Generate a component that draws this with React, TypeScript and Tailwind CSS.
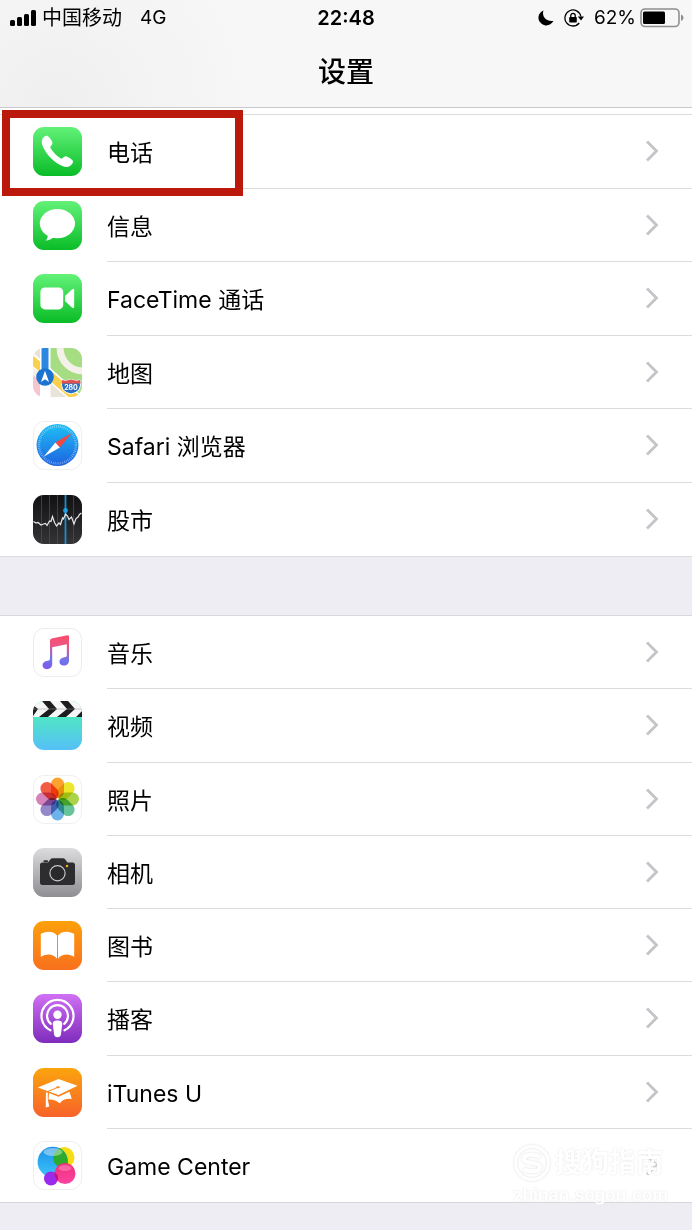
import React from 'react';

const PhoneIcon = () => (
  <>
    <rect width="49" height="49" rx="11" fill="url(#green)" />
    <path
      d="M9.5 11.8C11 9.3 13.3 8.3 15 9.2C16.8 10.4 18.8 13.3 19.4 15.4C19.8 17 18.6 18 17.6 19.2C17.2 20 17.4 20.8 18 21.8C20.4 25.6 23.6 28.9 27.4 31.2C28.4 31.8 29.2 31.7 29.9 31.1C31 29.8 32 29 33.7 29.4C35.9 30.1 38.6 31.9 39.7 33.5C40.6 35.2 39 37.8 36.9 39C34.8 40.2 32.2 40.2 29.4 39C21 35.4 13.6 27.8 10 19.7C8.6 16.6 8.3 14 9.5 11.8Z"
      fill="#fff"
    />
  </>
);

const MessagesIcon = () => (
  <>
    <rect width="49" height="49" rx="11" fill="url(#green)" />
    <ellipse cx="24.4" cy="22.6" rx="17.6" ry="14.6" fill="#fff" />
    <path d="M14.5 32C15.3 35 14.8 37.4 12.6 39.6C16 39.4 18.8 38 20.8 35.8Z" fill="#fff" />
  </>
);

const FaceTimeIcon = () => (
  <>
    <rect width="49" height="49" rx="11" fill="url(#green)" />
    <rect x="7.4" y="13.4" width="22.8" height="22" rx="4.5" fill="#fff" />
    <path d="M32 22L39.2 15.2Q41.2 14 41.2 16.2V32.8Q41.2 35 39.2 33.8L32 27Z" fill="#fff" />
  </>
);

const MapsIcon = () => (
  <g clipPath="url(#tile)">
    <rect width="49" height="49" fill="#f4f1ea" />
    <path d="M17 0H49V49H42C34 41 25 33 17 26Z" fill="#a6dc82" />
    <path d="M0 9L7 14V0H0Z" fill="#e8e2da" />
    <path d="M0 27L7 33V49H0Z" fill="#f7c5ce" />
    <path d="M17 35L33 49H17Z" fill="#e9e4dc" />
    <path d="M27 0C27.5 13 37 22.5 49 23" fill="none" stroke="#f4f1ea" strokeWidth="7" />
    <path d="M-2 10L44 51" stroke="#fff" strokeWidth="11" />
    <path d="M-2 11L44 51" stroke="#fbd04a" strokeWidth="8" />
    <rect x="7" width="10.5" height="49" fill="#fff" />
    <rect x="8.5" width="7" height="29" fill="#2b87e0" />
    <circle cx="12" cy="29" r="8.8" fill="#1b73d2" />
    <path d="M12 22.8L16 34L12 31.2L8 34Z" fill="#fff" />
    <path d="M29 32Q33 33.5 38 31.5Q43 33.5 47 32Q48.5 38 46 42Q43 45 38 46Q33 45 30 42Q27.5 38 29 32Z" fill="#2b6fc0" stroke="#fff" />
    <path d="M29 32Q33 33.5 38 31.5Q43 33.5 47 32L47.6 35.5H28.4Z" fill="#e0524b" />
    <text x="38" y="42" textAnchor="middle" fontSize="7" fontWeight="700" fill="#fff">280</text>
  </g>
);

const SafariIcon = () => (
  <>
    <rect x="0.5" y="0.5" width="48" height="48" rx="10.5" fill="#fff" stroke="#efefef" />
    <circle cx="24.5" cy="24" r="21" fill="url(#safari)" />
    <circle cx="24.5" cy="24" r="18.5" fill="none" stroke="#fff" strokeOpacity="0.55" strokeWidth="2.4" strokeDasharray="0.6 1.337" />
    <path d="M38.8 12L22.4 21.4L26.8 26.4Z" fill="#f4473f" />
    <path d="M10.6 35.8L22.4 21.4L26.8 26.4Z" fill="#fff" />
  </>
);

const StocksIcon = () => (
  <>
    <rect width="49" height="49" rx="11" fill="url(#stocks)" />
    <path d="M8.5 0V49M16.5 0V49M24.5 0V49M40.5 0V49" stroke="#4b4b4f" strokeWidth="0.8" />
    <path d="M32.5 0V49" stroke="#1b8fce" strokeWidth="1.8" />
    <path
      d="M0.5 26.5L3 28L5 27.5L8 30L10.5 29L12.5 28.5L14 30.5L16.5 26L18 26.5L19.5 21.5L21.5 27.5L23.5 31L26 28L27.5 29.5L29.5 23L30.5 24L32.5 19L34.5 21L36 24.5L38.5 22L41 29L43 23.5L45 22L46.5 19.5L48.5 18"
      fill="none"
      stroke="#e8e8e8"
      strokeWidth="1.2"
    />
    <circle cx="32.5" cy="15.5" r="2.4" fill="#22a0e4" />
  </>
);

const MusicIcon = () => (
  <>
    <rect x="0.5" y="0.5" width="48" height="48" rx="10.5" fill="#fff" stroke="#ececec" />
    <path
      d="M17 12.5Q17 11 18.5 10.6L34.5 7.2Q36 7 36 8.5V32.5C36 35.5 34 37.6 30.7 37.6C28.2 37.6 26.4 36 26.4 33.8C26.4 31 28.6 29.8 31.500 29.3C33.2 29 33.8 28.6 33.8 27V16.2L19.2 19.3V36C19.2 39 17 41.2 13.7 41.2C11.2 41.2 9.5 39.5 9.5 37.3C9.5 34.6 11.6 33.3 14.6 32.8C16.4 32.5 17 32 17 30.5Z"
      fill="url(#music)"
    />
  </>
);

const VideosIcon = () => (
  <g clipPath="url(#tile)">
    <rect width="49" height="49" fill="url(#videos)" />
    <rect width="49" height="16" fill="#f6f6f6" />
    <path d="M9 0H17L24 8H16Z M27 0H35L42 8H34Z M45 0H49V5Z" fill="#1d1d1f" />
    <path d="M0 4L5 8L0 15Z M16 8H24L15 16H6Z M34 8H42L33 16H24Z M49 10V16H43Z" fill="#1d1d1f" />
    <path d="M0 8H49" stroke="#9a9a9a" strokeWidth="0.5" />
  </g>
);

const petals = [
  { angle: 0, fill: '#fbA22f' },
  { angle: 45, fill: '#ede52e' },
  { angle: 90, fill: '#abd44b' },
  { angle: 135, fill: '#66c39b' },
  { angle: 180, fill: '#6db2e8' },
  { angle: 225, fill: '#9489ca' },
  { angle: 270, fill: '#d484b8' },
  { angle: 315, fill: '#f25b44' },
];

const PhotosIcon = () => (
  <>
    <rect x="0.5" y="0.5" width="48" height="48" rx="10.5" fill="#fff" stroke="#efefef" />
    {petals.map((petal) => (
      <rect
        key={petal.angle}
        x="18"
        y="2.5"
        width="13"
        height="20.5"
        rx="6.5"
        fill={petal.fill}
        transform={`rotate(${petal.angle} 24.5 24)`}
        className="mix-blend-multiply"
      />
    ))}
  </>
);

const CameraIcon = () => (
  <>
    <rect width="49" height="49" rx="11" fill="url(#camera)" />
    <path
      d="M9.5 14.5H15L17.5 11.2Q18.3 10.3 19.5 10.3H30Q31.2 10.3 32 11.2L34.5 14.5H39.5Q42 14.5 42 17V34.5Q42 37 39.5 37H9.5Q7 37 7 34.5V17Q7 14.5 9.5 14.5Z"
      fill="#2d2d30"
    />
    <rect x="10.5" y="12.2" width="4.5" height="2" rx="0.8" fill="#2d2d30" />
    <circle cx="24.5" cy="25.3" r="7.6" fill="#29292b" stroke="#c9c9cd" strokeWidth="1.2" />
    <circle cx="34" cy="18" r="1.3" fill="#f5a623" />
  </>
);

const BooksIcon = () => (
  <>
    <rect width="49" height="49" rx="11" fill="url(#books)" />
    <path d="M24 14.5C21.5 11.5 18 10.6 14 10.9C11.5 11.1 9.3 11.8 7.8 13V36C12 32.6 20 32.2 24 37.8Z" fill="#fff" />
    <path d="M25 14.5C27.5 11.5 31 10.6 35 10.9C37.5 11.1 39.7 11.8 41.2 13V36C37 32.6 29 32.2 25 37.8Z" fill="#fff" />
  </>
);

const PodcastsIcon = () => (
  <>
    <rect width="49" height="49" rx="11" fill="url(#podcasts)" />
    <path d="M17.5 36.3A16 16 0 1 1 31.5 36.3" fill="none" stroke="#fff" strokeWidth="2.2" strokeLinecap="round" />
    <path d="M17.8 29.8A10.5 10.5 0 1 1 31.2 29.8" fill="none" stroke="#fff" strokeWidth="2.2" strokeLinecap="round" />
    <circle cx="24.5" cy="20.8" r="4.2" fill="#fff" />
    <path d="M24.5 26.5C27.5 26.5 29.5 27.5 29.2 30.3L28 40C27.7 42.3 26.5 43.3 24.5 43.3C22.5 43.3 21.3 42.3 21 40L19.8 30.3C19.5 27.5 21.5 26.5 24.5 26.5Z" fill="#fff" />
  </>
);

const ITunesUIcon = () => (
  <>
    <rect width="49" height="49" rx="11" fill="url(#itunes)" />
    <path d="M4.8 19.5L25.5 11L44.5 17.8L25.5 27Z" fill="#fff" />
    <path d="M16 25L25.5 28.8L36.5 23.8L38.8 31C34 30.2 29.5 31.5 26.8 35.3C23.5 32.5 19.5 31 15.5 31.5Z" fill="#fff" />
    <path d="M25 19.3L14 23.8" fill="none" stroke="#f98a22" strokeWidth="1" />
    <path d="M13 24.5H14.8V31.500L16.2 38.5L12.8 39.5V32Z" fill="#fff" />
    <ellipse cx="25" cy="19.3" rx="2" ry="1" fill="#f98a22" />
  </>
);

const GameCenterIcon = () => (
  <>
    <rect x="0.5" y="0.5" width="48" height="48" rx="10.5" fill="#fff" stroke="#efefef" />
    <circle cx="31" cy="16.5" r="10.5" fill="#f5dd16" />
    <circle cx="19.8" cy="21" r="15.2" fill="url(#bubble)" />
    <path d="M26.500 7C32 9.500 36 16.500 34.500 25.500C32 27.800 26 27.500 22.500 23.500C18.500 18.500 19.500 10.500 26.500 7Z" fill="#2cab2f" />
    <circle cx="18" cy="37.5" r="7" fill="#9b2bec" />
    <circle cx="32" cy="32.5" r="10.5" fill="url(#pink)" />
    <path d="M22 29.5A10.5 10.5 0 0 0 24.6 40A7 7 0 0 0 22 31.6Z" fill="#c3127f" />
    <ellipse cx="20" cy="11" rx="9.5" ry="4" fill="#fff" fillOpacity="0.4" />
    <ellipse cx="32" cy="27" rx="6.5" ry="3" fill="#fff" fillOpacity="0.25" />
  </>
);

// Gradients and clip shapes shared by the app icons
const IconDefs = () => (
  <svg width="0" height="0" className="absolute" aria-hidden="true">
    <defs>
      <clipPath id="tile"><rect width="49" height="49" rx="11" /></clipPath>
      <linearGradient id="green" x2="0" y2="1"><stop stopColor="#62f278" /><stop offset="1" stopColor="#0abc27" /></linearGradient>
      <linearGradient id="safari" x2="0" y2="1"><stop stopColor="#1fc0f6" /><stop offset="1" stopColor="#1d62e0" /></linearGradient>
      <linearGradient id="stocks" x2="0" y2="1"><stop stopColor="#111113" /><stop offset="1" stopColor="#343437" /></linearGradient>
      <linearGradient id="music" x1="0.5" y1="0" x2="0.4" y2="1">
        <stop stopColor="#f94d6c" />
        <stop offset="0.3" stopColor="#ee5585" />
        <stop offset="0.7" stopColor="#6a77ea" />
        <stop offset="1" stopColor="#8257ee" />
      </linearGradient>
      <linearGradient id="videos" x2="0" y2="1"><stop offset="0.33" stopColor="#4fe5c4" /><stop offset="1" stopColor="#55c0f8" /></linearGradient>
      <linearGradient id="camera" x2="0" y2="1"><stop stopColor="#dcdcde" /><stop offset="1" stopColor="#8e8e93" /></linearGradient>
      <linearGradient id="books" x2="0" y2="1"><stop stopColor="#fda00a" /><stop offset="1" stopColor="#f8701e" /></linearGradient>
      <linearGradient id="podcasts" x2="0" y2="1"><stop stopColor="#d070f4" /><stop offset="1" stopColor="#7f2cbc" /></linearGradient>
      <linearGradient id="itunes" x2="0" y2="1"><stop stopColor="#fba40e" /><stop offset="1" stopColor="#f7622a" /></linearGradient>
      <linearGradient id="bubble" x2="0" y2="1"><stop stopColor="#1b8fe6" /><stop offset="1" stopColor="#3cc6fa" /></linearGradient>
      <linearGradient id="pink" x2="0" y2="1"><stop stopColor="#f0307c" /><stop offset="1" stopColor="#fc43a2" /></linearGradient>
    </defs>
  </svg>
);

interface Item {
  label: string;
  icon: React.FC;
  highlighted?: boolean;
}

const communication: Item[] = [
  { label: '电话', icon: PhoneIcon, highlighted: true },
  { label: '信息', icon: MessagesIcon },
  { label: 'FaceTime 通话', icon: FaceTimeIcon },
  { label: '地图', icon: MapsIcon },
  { label: 'Safari 浏览器', icon: SafariIcon },
  { label: '股市', icon: StocksIcon },
];

const media: Item[] = [
  { label: '音乐', icon: MusicIcon },
  { label: '视频', icon: VideosIcon },
  { label: '照片', icon: PhotosIcon },
  { label: '相机', icon: CameraIcon },
  { label: '图书', icon: BooksIcon },
  { label: '播客', icon: PodcastsIcon },
  { label: 'iTunes U', icon: ITunesUIcon },
  { label: 'Game Center', icon: GameCenterIcon },
];

const Row = ({ label, icon: Icon, highlighted }: Item) => (
  <li className="group relative flex">
    <button type="button" className="flex flex-1 items-center pl-[33px] text-left">
      <svg width="49" height="49" viewBox="0 0 49 49" className="shrink-0" aria-hidden="true">
        <Icon />
      </svg>
      <span className="ml-[25px] flex flex-1 items-center justify-between self-stretch border-b border-[#dcdce0] pr-8 group-last:border-b-0">
        <span className="pt-1 text-[23px] leading-8">{label}</span>
        <svg width="16" height="24" viewBox="0 0 16 24" fill="none" stroke="#c4c4c9" strokeWidth="2.8" aria-hidden="true">
          <path d="M3 2.5L12.500 12L3 21.5" />
        </svg>
      </span>
    </button>
    {highlighted && (
      <div className="pointer-events-none absolute -top-[5px] left-[2px] h-[86px] w-[241px] border-8 border-[#bb190c]"></div>
    )}
  </li>
);

const StatusBar = () => (
  <div className="grid grid-cols-[1fr_auto_1fr] items-center px-2 pt-1 text-[19px] leading-7">
    <div className="flex items-center">
      <svg width="28" height="18" viewBox="0 0 28 18" aria-hidden="true">
        <rect x="2" y="11" width="5" height="6" rx="1.5" />
        <rect x="9" y="8" width="5" height="9" rx="1.5" />
        <rect x="16" y="5" width="5" height="12" rx="1.5" />
        <rect x="23" y="1" width="5" height="16" rx="1.5" />
      </svg>
      <span className="ml-[6px] text-[20px]">中国移动</span>
      <span className="ml-[18px]">4G</span>
    </div>
    <span className="text-[20px] font-semibold">22:48</span>
    <div className="flex items-center justify-end">
      <svg width="16" height="16" viewBox="0 0 16 16" aria-hidden="true">
        <path d="M5.5 0.5C3.5 5.5 7.5 12 15.5 11C13.5 14.3 10 16 6.8 15.2C2.8 14.2 0 10.8 0.5 6.8C0.8 4 2.7 1.6 5.5 0.5Z" />
      </svg>
      <svg width="20" height="18" viewBox="0 0 20 18" className="ml-[10px]" aria-hidden="true">
        <path d="M16.8 7.500A8 8 0 1 0 15.2 14" fill="none" stroke="#000" strokeWidth="1.300" />
        <path d="M13.8 7.500H20L17 11.500Z" />
        <rect x="5.200" y="8" width="7.600" height="5.500" rx="0.8" />
        <path d="M6.800 8V6.500A2.200 2.200 0 0 1 11.200 6.500V8" fill="none" stroke="#000" strokeWidth="1.300" />
      </svg>
      <span className="ml-[10px]">62%</span>
      <svg width="44" height="20" viewBox="0 0 44 20" className="ml-1" aria-hidden="true">
        <rect x="1" y="1" width="38" height="17.5" rx="4" fill="none" stroke="#8f8f8f" strokeWidth="1.6" />
        <rect x="3" y="3.5" width="22" height="12.5" rx="1.5" />
        <path d="M41 6.5Q43.5 7.5 43.5 9.8Q43.5 12 41 13Z" fill="#8f8f8f" />
      </svg>
    </div>
  </div>
);

const Watermark = () => (
  <div className="pointer-events-none absolute right-6 bottom-0 translate-y-1 text-white [text-shadow:0_0_2px_#e0e0e3]">
    <div className="flex items-center gap-1">
      <svg width="38" height="40" viewBox="0 0 38 40" fill="none" className="drop-shadow-[0_0_1px_#dcdce0]" aria-hidden="true">
        <circle cx="19" cy="20" r="16.5" stroke="#fff" strokeWidth="3" />
        <path d="M27 14C22 10.5 11 11 11 16C11 21.5 27 18.5 27 24C27 29 16 29.5 11 26" stroke="#fff" strokeWidth="4" />
      </svg>
      <span className="text-[27px] leading-10 font-bold">搜狗指南</span>
    </div>
    <div className="text-[17px] leading-6 font-bold">zhinan.sogou.com</div>
  </div>
);

const App = () => {
  return (
    <div className="min-h-screen bg-[#eeedf3] font-['Inter','Noto_Sans_CJK_SC',sans-serif] text-black">
      <IconDefs />
      <header className="h-27 border-b border-[#c9c9cb] bg-[#f7f7f7] bg-[radial-gradient(circle_at_8%_100%,#efefef,#f7f7f7_30%)]">
        <StatusBar />
        <h1 className="pt-5 text-center text-[28px] leading-10 font-medium">设置</h1>
      </header>

      <main>
        <div className="bg-white pt-[6px]">
          <ul className="grid min-h-[443px] auto-rows-fr border-y border-[#dcdce0]">
            {communication.map((item) => (
              <Row key={item.label} {...item} />
            ))}
          </ul>
        </div>

        <div className="relative mt-[58px]">
          <ul className="grid min-h-[588px] auto-rows-fr border-y border-[#d8d8dc] bg-white">
            {media.map((item) => (
              <Row key={item.label} {...item} />
            ))}
          </ul>
          <Watermark />
        </div>
      </main>
    </div>
  );
};

export default App;
